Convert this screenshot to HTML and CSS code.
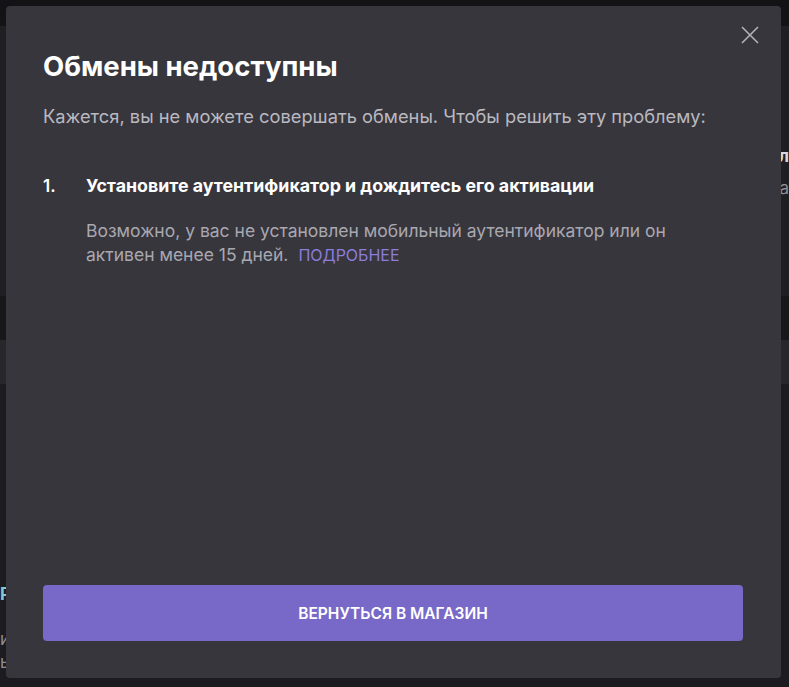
FILE: index.html
```html
<!DOCTYPE html>
<html>

<head>
    <title>Обмены недоступны</title>
    <link rel="stylesheet" href="styles.css">
</head>

<body>
    <div class="page">
        <div class="top-bar"></div>
        <div class="page-row">
            <span class="frag frag-right">л</span>
            <span class="frag frag-right-2">а</span>
        </div>
        <div class="band band-dark"></div>
        <div class="band band-light"></div>
        <div class="page-bottom">
            <span class="frag frag-left">Р</span>
            <span class="frag frag-left-2">и</span>
            <span class="frag frag-left-3">ый</span>
        </div>
    </div>

    <div class="modal">
        <button class="close" aria-label="Закрыть">
            <svg width="18" height="18" viewBox="0 0 18 18">
                <path d="M1 1 L17 17 M17 1 L1 17" stroke="#b4b3ba" stroke-width="1.6" fill="none" />
            </svg>
        </button>
        <h1>Обмены недоступны</h1>
        <p class="intro">Кажется, вы не можете совершать обмены. Чтобы решить эту проблему:</p>
        <ol class="steps">
            <li>
                <span class="num">1.</span>
                <div class="step-body">
                    <div class="step-title">Установите аутентификатор и дождитесь его активации</div>
                    <p class="step-text">Возможно, у вас не установлен мобильный аутентификатор или он активен менее 15 дней.<a href="#" class="more">Подробнее</a></p>
                </div>
            </li>
        </ol>
        <button class="back-button">Вернуться в магазин</button>
    </div>
</body>

</html>
```

FILE: styles.css
```css
body {
    margin: 0;
    background-color: #1b1b1f;
    font-family: Inter, Roboto, 'Liberation Sans', sans-serif;
    width: 789px;
    height: 687px;
    overflow: hidden;
}

.page {
    height: 687px;
    display: flex;
    flex-direction: column;
}

.top-bar {
    height: 26px;
    background-color: #131316;
}

.page-row {
    height: 270px;
    background-color: #1e1e23;
    position: relative;
}

.band {
    height: 44px;
}

.band-dark {
    background-color: #17171a;
}

.band-light {
    background-color: #26262b;
}

.page-bottom {
    flex: 1;
    position: relative;
    background-color: #1c1c20;
}

.frag {
    position: absolute;
    color: #8f8e96;
    font-size: 17px;
}

.frag-right {
    right: 0;
    top: 120px;
    color: #d8d8e0;
    font-weight: bold;
}

.frag-right-2 {
    right: 0;
    top: 152px;
}

.frag-left {
    left: 0;
    top: 200px;
    color: #7ec8d8;
    font-weight: bold;
}

.frag-left-2 {
    left: 0;
    top: 245px;
}

.frag-left-3 {
    left: 0;
    top: 268px;
}

.modal {
    position: absolute;
    left: 6px;
    top: 6px;
    width: 775px;
    height: 672px;
    box-sizing: border-box;
    padding: 44px 38px 37px 37px;
    background-color: #37363d;
    border-radius: 4px;
    display: flex;
    flex-direction: column;
    color: #ffffff;
}

.close {
    position: absolute;
    right: 22px;
    top: 20px;
    width: 18px;
    height: 18px;
    padding: 0;
    border: none;
    background: none;
    cursor: pointer;
}

h1 {
    margin: 0;
    font-size: 27.5px;
    line-height: 32px;
    font-weight: bold;
}

.intro {
    margin: 22px 0 0;
    font-size: 18.3px;
    line-height: 24px;
    color: #bab9c0;
}

.steps {
    list-style: none;
    margin: 46px 0 0;
    padding: 0;
}

.steps li {
    display: flex;
}

.num {
    width: 43px;
    font-size: 17px;
    line-height: 24px;
    font-weight: 600;
}

.step-title {
    font-size: 17.8px;
    line-height: 24px;
    font-weight: 700;
}

.step-text {
    margin: 21px 0 0;
    font-size: 17.5px;
    line-height: 24px;
    color: #a9a8b0;
    max-width: 620px;
}

.more {
    margin-left: 10px;
    color: #8b7ddb;
    font-size: 16px;
    line-height: 20px;
    text-transform: uppercase;
    text-decoration: none;
}

.back-button {
    margin-top: auto;
    height: 56px;
    border: none;
    border-radius: 4px;
    background-color: #7869c8;
    color: #ffffff;
    font-family: Inter, Roboto, 'Liberation Sans', sans-serif;
    font-size: 15.5px;
    font-weight: 600;
    text-transform: uppercase;
    cursor: pointer;
}
```
